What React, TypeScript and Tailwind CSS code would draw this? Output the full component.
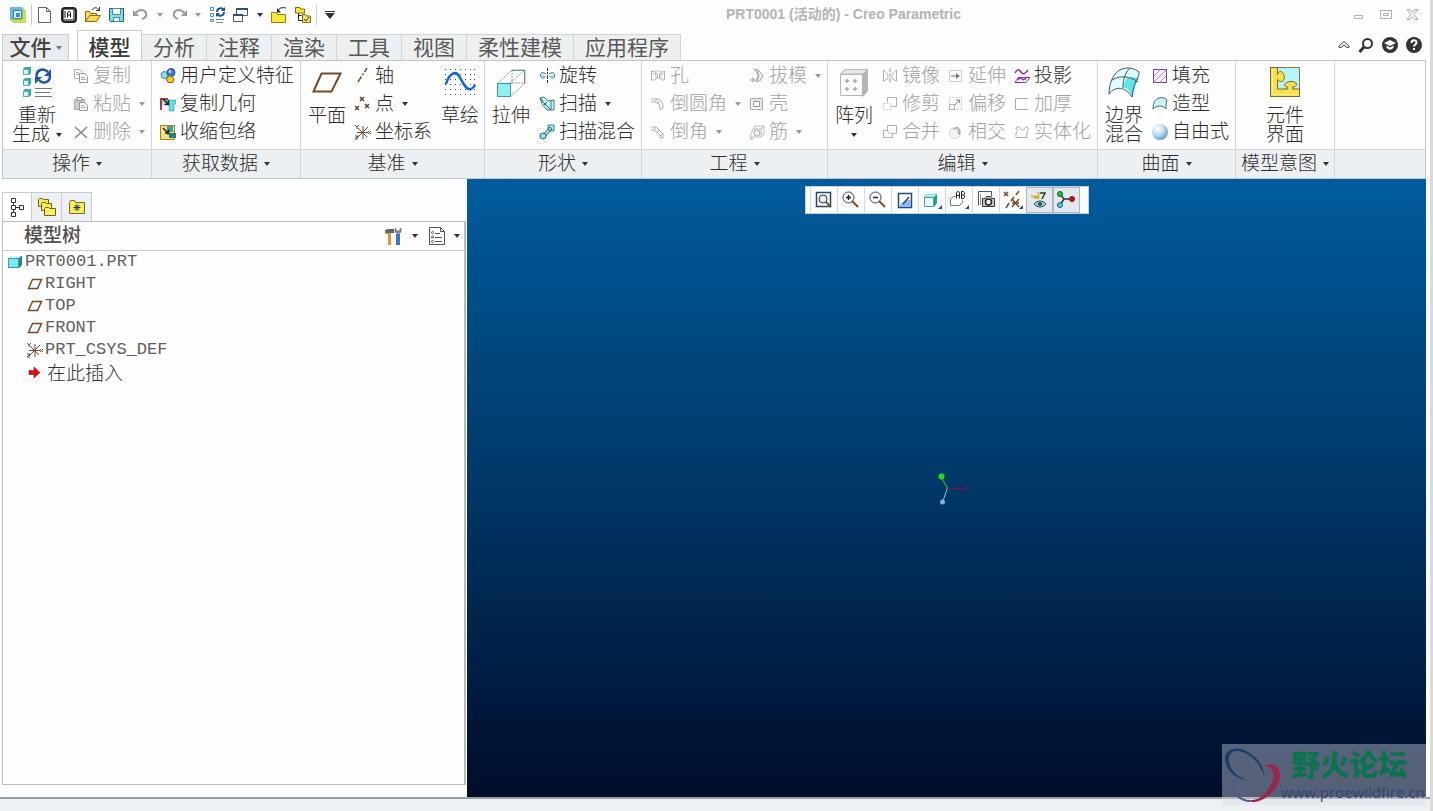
import React from "react";

type IconProps = { children: React.ReactNode; w?: number; h?: number };

function Svg({ children, w = 16, h = 16 }: IconProps) {
  return (
    <svg width={w} height={h} viewBox={`0 0 ${w} ${h}`} fill="none" stroke="none" aria-hidden="true" className="shrink-0">
      {children}
    </svg>
  );
}

function Caret({ color = "#333" }: { color?: string }) {
  return (
    <Svg w={6} h={4}>
      <path d="M0 0h6L3 4z" fill={color} />
    </Svg>
  );
}

const G = "#b0b0b0";

/* ---------- Quick access icons ---------- */
const AppIcon = () => (
  <Svg w={18} h={18}>
    <path d="M1 1h12l4 4v12H5l-4-3z" fill="#9fcf6a" />
    <path d="M1 1h12v12H1z" fill="#6db6e6" />
    <path d="M5 5h12v12H5z" fill="#c6dc5e" />
    <path d="M4.500 4.500h8v8h-8z" fill="#d6f0fb" stroke="#2a7fb8" />
    <path d="M7 7h4v4H7z" fill="#3b8fd0" />
    <path d="M13 6v7H6" stroke="#5c9c35" />
  </Svg>
);
const NewIcon = () => (
  <Svg w={18} h={18}>
    <path d="M2.500 1.500h8l4 4v11h-12z" fill="#fff" stroke="#666" />
    <path d="M10.500 1.500v4h4" stroke="#666" />
  </Svg>
);
const ModelBadgeIcon = () => (
  <Svg w={18} h={18}>
    <rect x="2" y="2" width="14" height="14" rx="3" fill="#777" stroke="#222" strokeWidth="2" />
    <rect x="4" y="4" width="9" height="9" fill="#fff" />
    <path d="M5 5v7M7.500 11.500V7l1-1.500h1l1 1.500v4.500M7.500 9h3" stroke="#111" />
  </Svg>
);
const OpenIcon = () => (
  <Svg w={18} h={18}>
    <path d="M1.500 15.500v-10h4l1 2h6v2" fill="#fbe26a" stroke="#8a6a10" />
    <path d="M1.500 15.500l4-6h11l-4 6z" fill="#ffd84a" stroke="#8a6a10" />
    <path d="M8 4c2-3 5-3 7 0M15.500 1v3.500H12" stroke="#333" />
  </Svg>
);
const SaveIcon = () => (
  <Svg w={18} h={18}>
    <path d="M1.500 2.500h14v13h-13l-1-1z" fill="#7fdcea" stroke="#2a5a78" />
    <path d="M4.500 2.500h8v6h-8z" fill="#fff" stroke="#4a8aa0" />
    <path d="M5.500 11.500h6v4h-6z" fill="#e8f8fb" stroke="#4a8aa0" />
  </Svg>
);
const UndoIcon = () => (
  <Svg w={18} h={18}>
    <path d="M3 8c3-5 9-5 11-1 1 3-1 5-4 6" stroke="#9a9a9a" strokeWidth="2" />
    <path d="M1 4v6h6z" fill="#9a9a9a" />
  </Svg>
);
const RedoIcon = () => (
  <Svg w={18} h={18}>
    <path d="M15 8C12 3 6 3 4 7c-1 3 1 5 4 6" stroke="#9a9a9a" strokeWidth="2" />
    <path d="M17 4v6h-6z" fill="#9a9a9a" />
  </Svg>
);
const RegenSmall = () => (
  <Svg w={18} h={18}>
    <path d="M2.500 1.500h3v3h-3zM2.500 7.500h3v3h-3zM2.500 13.500h3v2h-3z" fill="#d9fbf6" stroke="#4a9a94" />
    <path d="M9 6c0-4 5-5 7-2M16 6c0 4-5 5-7 2" stroke="#1c4fa0" strokeWidth="2" />
    <path d="M17 1v4h-4zM8 11V7h4z" fill="#1c4fa0" />
    <path d="M8 13.500h8M8 16.500h7" stroke="#888" />
  </Svg>
);
const WindowsIcon = () => (
  <Svg w={18} h={18}>
    <path d="M4.500 2.500h11v7h-11z" fill="#fff" stroke="#555" />
    <path d="M4 3h12" stroke="#2d4f80" strokeWidth="2" />
    <path d="M1.500 8.500h9v7h-9z" fill="#fff" stroke="#555" />
    <path d="M1 9h10" stroke="#2d4f80" strokeWidth="2" />
  </Svg>
);
const CloseFolderIcon = () => (
  <Svg w={18} h={18}>
    <path d="M1.500 6.500h5l1 2h8v8h-14z" fill="#f8e838" stroke="#9a8410" />
    <path d="M8 5c1-3 4-4 8-3" stroke="#222" />
    <path d="M7 2v4.500h4z" fill="#222" />
  </Svg>
);
const TreeFolderIcon = () => (
  <Svg w={18} h={18}>
    <path d="M1.500 1.500h4l1 1.500h4v4h-9z" fill="#f8e838" stroke="#8a6a10" />
    <path d="M4.500 7v7.500H8M4.500 9.500h3" stroke="#222" />
    <path d="M8.500 8.500h3l1 1.500h4v6.500h-8z" fill="#f8e060" stroke="#8a6a10" />
    <path d="M10 13l2 2 3-4" stroke="#333" />
  </Svg>
);

/* ---------- Large ribbon icons ---------- */
const RegenBig = () => (
  <Svg w={32} h={32}>
    {[1, 12, 23].map((y) => (
      <g key={y}>
        <path d={`M2 ${y + 2}l2-2h6v6l-2 2H2z`} fill="#3aa99b" />
        <path d={`M2.500 ${y + 2.5}h5v5h-5z`} fill="#cffaf4" stroke="#55b5aa" />
      </g>
    ))}
    <path d="M15.500 11C15 4 22 1 27 6M29 10c0 6-7 9-11 4" stroke="#1f55a5" strokeWidth="2.500" />
    <path d="M30 3v7h-7zM14 18v-7h7z" fill="#1f55a5" />
    <path d="M14 22.500h17M14 26.500h15M14 30.500h17" stroke="#777" />
  </Svg>
);
const PlaneBig = () => (
  <Svg w={32} h={32}>
    <path d="M10.500 7.500h19l-9 18h-18z" fill="#fff" stroke="#7a4a26" strokeWidth="2" />
  </Svg>
);
const SketchBig = () => (
  <Svg w={32} h={32}>
    {[3, 8, 13, 18, 23, 28].map((y) =>
      [2, 7, 12, 17, 22, 27, 31].map((x) => <rect key={`${x}-${y}`} x={x - 1} y={y} width="1" height="1" fill="#2a4a7a" />),
    )}
    <path d="M2 18C5 8 11 4 15 10s7 15 12 13c2-1 3-2 4-4" stroke="#1466d0" strokeWidth="2.500" />
  </Svg>
);
const ExtrudeBig = () => (
  <Svg w={32} h={32}>
    <path d="M2 18L17 4h13v13L15 31" fill="#fff" stroke="#888" strokeDasharray="2 1" />
    <path d="M15 17L30 4M17 4v13l-3 3M17 17h13" stroke="#999" strokeDasharray="2 1" />
    <path d="M17 4.500h12.500v13" stroke="#4f9aa0" />
    <path d="M2.500 17.500h13v13h-13z" fill="#8ff0f2" stroke="#3a9aa0" />
  </Svg>
);
const PatternBig = () => (
  <Svg w={32} h={32}>
    <path d="M2 8l5-5h23v22l-5 6z" fill="#b4b4b4" />
    <path d="M2.500 8l5-4.500h22L25 8z" fill="#e6e6e6" stroke="#bbb" />
    <path d="M2.500 8.500h22v21h-22z" fill="#fafafa" stroke="#b5b5b5" />
    {[[9, 15], [17, 15], [9, 23], [17, 23]].map(([x, y]) => (
      <path key={`${x}${y}`} d={`M${x - 2} ${y}h4M${x} ${y - 2}v4`} stroke="#aaa" strokeWidth="1.500" />
    ))}
  </Svg>
);
const BoundaryBig = () => (
  <Svg w={34} h={32}>
    <path d="M2 28C2 18 6 6 15 3c6-2 12-1 17 3-3 6-5 11-7 25C18 20 8 20 2 28z" fill="#dffcfc" />
    <path d="M19 13c5-3 9-1 13-1-3 5-5 10-6 19-3-6-6-9-10-10z" fill="#5fe6ea" />
    <path d="M2 28C2 18 6 6 15 3c6-2 12-1 17 3 1 5-6 10-7 25C18 20 8 20 2 28z" stroke="#46565c" />
    <path d="M5 14c8-5 18-4 26 2M23 2c-5 5-7 11-7 20" stroke="#46565c" />
  </Svg>
);
const ComponentBig = () => (
  <Svg w={32} h={32}>
    <path d="M1.500 1.500h29v29h-29z" fill="#b4f4fb" stroke="#7c7a4a" />
    <path
      d="M1.500 1.500h7v7c1-3 3-4 5-2 3 3 2 9-1 9-2 0-3-1-4-2v9.500h10v-2c-2 0-3-1-3-2 0-4 11-5 12-1 0 2-2 3-4 3v2h7v7.500h-29z"
      fill="#fbe04a"
      stroke="#7a6a28"
    />
    <path d="M3.500 3v25.500H29" stroke="#fff0a0" />
  </Svg>
);

/* ---------- Small ribbon icons ---------- */
const small: Record<string, React.ReactNode> = {
  copy: (
    <>
      <path d="M1.500 1.500h5l3 3v6h-8z" fill="#fff" stroke={G} />
      <path d="M6.500 5.500h5l3 3v6h-8z" fill="#fff" stroke="#999" />
      <path d="M3 4.500h3M3 6.500h3M8 9.500h4M8 11.500h5" stroke={G} />
    </>
  ),
  paste: (
    <>
      <path d="M1.500 3.500h10v10h-10z" fill="#ccc" stroke="#aaa" />
      <path d="M4 1.500h5v3H4z" fill="#eee" stroke="#999" />
      <path d="M6.500 6.500h5l3 3v5h-8z" fill="#fff" stroke="#999" />
      <path d="M8 9.500h3M8 11.500h5" stroke={G} />
    </>
  ),
  del: <path d="M2 3l12 11M14 3L2 14" stroke="#888" strokeWidth="1.500" />,
  udf: (
    <>
      <circle cx="4.500" cy="7" r="3.500" fill="#7fe0e8" stroke="#3a8fa0" />
      <circle cx="11" cy="4.500" r="4" fill="#3f74d8" stroke="#28509a" />
      <circle cx="10" cy="3.500" r="1.500" fill="#b8d0ff" />
      <path d="M10 7.500l4 3-1 4H8l-2-3.500z" fill="#f3c62a" stroke="#8a6a10" />
    </>
  ),
  copyGeom: (
    <>
      <path d="M0 2h8v2H2v10H0z" fill="#a33d48" />
      <path d="M2 4h6v5H2z" fill="#cfd6d8" />
      <path d="M7 4h9v4h-2v7H9V8H7z" fill="#5fe0e0" stroke="#2a8f94" strokeWidth="0.500" />
      <path d="M3 3l5 5M8.500 4v4.500H4.500" stroke="#222" strokeWidth="1.500" />
    </>
  ),
  shrink: (
    <>
      <path d="M0.500 1.500h14v14H.500z" fill="#ffe36a" stroke="#a08020" />
      <path d="M7 2h6v6h-3v3H7z" fill="#3aa0a4" />
      <path d="M9 9h7v5H9z" fill="#1e7c86" />
      <path d="M3 4l5 5M8.500 5.500V9H5" stroke="#222" strokeWidth="1.500" />
    </>
  ),
  axis: <path d="M12 0L9.500 4M8.500 5.500L7.500 7M6.500 8.500L3 14" stroke="#8a5428" strokeWidth="1.500" />,
  point: (
    <path d="M5 1l4 4M9 1L5 5M0 10l4 4M4 10l-4 4M10 8l4 4M14 8l-4 4" stroke="#6a4226" strokeWidth="1.500" />
  ),
  csys: (
    <>
      <path d="M2 14L13 3M8 2v13M2 8.500h11M3 4l9 9" stroke="#7a4a26" />
      <path d="M0 1l2 2 2-2M2 3v2M13 7l3 3M16 7l-3 3M0 12h3l-3 3h3" stroke="#555" />
    </>
  ),
  revolve: (
    <>
      <path d="M8.500 0v3M8.500 4v2M8.500 7v4M8.500 12v3" stroke="#333" />
      <path d="M7 6C3 3 0 6 2 9c1 2 4 1 4-1M10 6c4-3 7 0 5 3-1 2-4 1-4-1" stroke="#2a6a72" />
      <circle cx="4" cy="8" r="1.500" fill="#7fe6ea" />
      <circle cx="13" cy="8" r="1.500" fill="#7fe6ea" />
    </>
  ),
  sweep: (
    <>
      <path d="M1 2l4-1 4 4 6-1v10H8L3 8z" fill="#bff4f6" stroke="#3a7a80" />
      <path d="M3 5l9 9M8 6l-3 3M1 2l3 3" stroke="#3a5a60" />
      <path d="M12 5v9" stroke="#3a7a80" />
    </>
  ),
  blend: (
    <>
      <path d="M9 1h6v6H9z" fill="#a8f0f4" stroke="#2f8288" />
      <path d="M4 13l8-9" stroke="#2f8288" strokeWidth="4" />
      <path d="M4 13l8-9" stroke="#8fe8ee" strokeWidth="2" />
      <circle cx="4" cy="12" r="3" fill="#8fe8ee" stroke="#2f6268" />
      <circle cx="11" cy="5" r="1.500" fill="#d8ffff" stroke="#2f6268" />
    </>
  ),
  hole: (
    <>
      <path d="M1.500 3v9h3l3-2v-4L4.500 4zM14.500 3v9h-3l-2-2v-4l3-2z" stroke={G} />
      <path d="M5 3h6v7H6z" stroke="#c4c4c4" />
      <path d="M2 6h3M11 6h3" stroke="#ccc" />
    </>
  ),
  round: <path d="M1 3h6c4 0 6 3 6 9M1 6h4c3 0 5 2 5 8M7 3l-3 3M13 12l-3 2M10 5L7 8" stroke={G} />,
  chamfer: <path d="M1 3h5l7 7v4h-3v-3L4 6H1M6 3L4 6M13 10l-3 2M9 6L7 9" stroke={G} />,
  draft: (
    <>
      <path d="M5 1l4 1 5 5-3 6-4 1 3-6z" fill="#ececec" stroke="#aaa" />
      <path d="M9 2v6l-2 5M1 12h4M3 10l3 2-3 2" stroke="#999" />
    </>
  ),
  shell: (
    <>
      <path d="M1.500 2.500h12v11h-12z" stroke="#aaa" />
      <path d="M4.500 5.500h6v5h-6z" stroke="#999" />
      <path d="M3 4h9M12 4v8" stroke="#ccc" />
    </>
  ),
  rib: (
    <>
      <path d="M1 13l3-8h8v8zM12 5l3-3v8l-3 3M4 5l2-3h9" stroke="#bbb" />
      <circle cx="8" cy="9" r="3" stroke="#aaa" />
      <path d="M1 15h3" stroke="#999" />
    </>
  ),
  mirror: (
    <>
      <path d="M8 0v15" stroke="#999" strokeDasharray="4 1" />
      <path d="M1.500 2v11l4-2c1-3 0-6-4-9zM14.500 2v11l-4-2c-1-3 0-6 4-9z" stroke={G} />
    </>
  ),
  trim: (
    <>
      <path d="M5.500 1.500h9v9h-5M5.500 1.500v5" stroke={G} />
      <path d="M1.500 7.500h7v6h-7z" stroke="#ccc" strokeDasharray="2 1" />
    </>
  ),
  merge: <path d="M5.500 1.500h9v8h-4v4h-9v-7h4zM5.500 6.500c0 2 2 3 5 3" stroke={G} />,
  extend: (
    <>
      <path d="M1.500 2.500h12v11h-12z" stroke="#ccc" />
      <path d="M3 8h6" stroke="#777" />
      <path d="M8 5l4 3-4 3z" fill="#777" />
    </>
  ),
  offset: (
    <>
      <path d="M1.500 1.500h12v12h-12z" stroke="#ccc" strokeDasharray="2 1" />
      <path d="M1.500 8.500h5v5h-5z" stroke={G} />
      <path d="M7 9l4-5M8 4h3.500v3" stroke="#888" />
    </>
  ),
  intersect: (
    <>
      <circle cx="7" cy="9" r="5.500" fill="#f4f4f4" stroke="#d4d4d4" />
      <path d="M5 5c4-2 6 1 5 5M8 3c3 0 5 3 3 8" stroke="#999" />
    </>
  ),
  project: (
    <>
      <path d="M1 5c2-4 4-4 6-1s4 2 7-2" stroke="#8a2fb0" strokeWidth="1.500" />
      <path d="M4 9.500h12l-4 5H1z" stroke="#8a2fb0" />
      <path d="M4 12c2-3 3-2 4-1s3 1 4-1" stroke="#8a2fb0" strokeWidth="1.500" />
    </>
  ),
  thicken: <path d="M14 2.500H1.500v11H14" stroke="#aaa" />,
  solidify: <path d="M2 13.500h11V7c2-1 2-4-1-4-1 3-4 4-6 1-2-2-5-1-4 1 2 0 2 2 0 4z" stroke="#aaa" />,
  fill: (
    <>
      <path d="M1.500 1.500h13v13h-13z" fill="#faf0ff" stroke="#7a45a8" />
      <path d="M2 8l6-6M2 14L14 2M8 14l6-6" stroke="#b08cd0" />
    </>
  ),
  style: (
    <>
      <path d="M1 13C1 7 3 3 7 2s6 0 8 2c-1 3-1 5-1 9-3-4-9-4-13 0z" fill="#c9f7f3" stroke="#46666a" />
    </>
  ),
};

function Sphere() {
  return (
    <Svg>
      <defs>
        <radialGradient id="ball" cx="0.35" cy="0.3" r="0.75">
          <stop offset="0" stopColor="#fff" />
          <stop offset="0.5" stopColor="#c0def5" />
          <stop offset="1" stopColor="#5c98cc" />
        </radialGradient>
      </defs>
      <circle cx="8" cy="8" r="8" fill="url(#ball)" />
    </Svg>
  );
}

/* ---------- Ribbon ---------- */
type Item = { label: string; icon: string; disabled?: boolean; menu?: boolean };

function SmallButton({ label, icon, disabled, menu }: Item) {
  return (
    <button
      type="button"
      disabled={disabled}
      className="flex h-7 items-center gap-1 whitespace-nowrap text-[19px] font-light leading-7 text-[#2c2c2c] disabled:text-[#a2a2a2]"
    >
      {icon === "sphere" ? <Sphere /> : <Svg>{small[icon]}</Svg>}
      <span>{label}</span>
      {menu && (
        <span className="ml-1">
          <Caret color={disabled ? "#999" : "#333"} />
        </span>
      )}
    </button>
  );
}

function Column({ items }: { items: Item[] }) {
  return (
    <div className="flex flex-col items-start">
      {items.map((i) => (
        <SmallButton key={i.label} {...i} />
      ))}
    </div>
  );
}

function BigButton({ icon, lines, wide, menu }: { icon: React.ReactNode; lines: string[]; wide?: boolean; menu?: "inline" | "below" }) {
  return (
    <button
      type="button"
      className={`flex shrink-0 flex-col items-center pt-1 text-[19px] font-light leading-[19px] text-[#2c2c2c] ${wide ? "w-14" : "w-10"}`}
    >
      {icon}
      <span className="mt-2 flex flex-col items-center whitespace-nowrap">
        {lines.map((l, n) => (
          <span key={l} className="flex items-center gap-1.5">
            {l}
            {menu === "inline" && n === lines.length - 1 && <Caret />}
          </span>
        ))}
      </span>
      {menu === "below" && (
        <span className="mt-2">
          <Caret />
        </span>
      )}
    </button>
  );
}

function Group({ title, width, pad = "px-1.5", children }: { title: string; width: string; pad?: string; children: React.ReactNode }) {
  return (
    <section className={`flex shrink-0 flex-col border-r border-[#d3d6d8] ${width}`}>
      <div className={`flex h-[88px] gap-2 pt-px ${pad}`}>{children}</div>
      <button
        type="button"
        className="flex h-[29px] items-center justify-center gap-1.5 whitespace-nowrap border-t border-[#d3d6d8] bg-[#edf0f2] text-[19px] font-light text-[#2c2c2c]"
      >
        {title}
        <Caret />
      </button>
    </section>
  );
}

function Ribbon() {
  return (
    <div className="ml-0.5 flex shrink-0 overflow-hidden border border-[#c3c6c8] bg-[#fdfdfd]">
      <Group title="操作" width="w-[149px]">
        <BigButton icon={<RegenBig />} lines={["重新", "生成"]} wide menu="inline" />
        <Column
          items={[
            { label: "复制", icon: "copy", disabled: true },
            { label: "粘贴", icon: "paste", disabled: true, menu: true },
            { label: "删除", icon: "del", disabled: true, menu: true },
          ]}
        />
      </Group>
      <Group title="获取数据" width="w-[149px]" pad="pl-2">
        <Column
          items={[
            { label: "用户定义特征", icon: "udf" },
            { label: "复制几何", icon: "copyGeom" },
            { label: "收缩包络", icon: "shrink" },
          ]}
        />
      </Group>
      <Group title="基准" width="w-[184px]">
        <BigButton icon={<PlaneBig />} lines={["平面"]} />
        <Column
          items={[
            { label: "轴", icon: "axis" },
            { label: "点", icon: "point", menu: true },
            { label: "坐标系", icon: "csys" },
          ]}
        />
        <BigButton icon={<SketchBig />} lines={["草绘"]} />
      </Group>
      <Group title="形状" width="w-[157px]">
        <BigButton icon={<ExtrudeBig />} lines={["拉伸"]} />
        <Column
          items={[
            { label: "旋转", icon: "revolve" },
            { label: "扫描", icon: "sweep", menu: true },
            { label: "扫描混合", icon: "blend" },
          ]}
        />
      </Group>
      <Group title="工程" width="w-[186px]" pad="pl-2">
        <Column
          items={[
            { label: "孔", icon: "hole", disabled: true },
            { label: "倒圆角", icon: "round", disabled: true, menu: true },
            { label: "倒角", icon: "chamfer", disabled: true, menu: true },
          ]}
        />
        <Column
          items={[
            { label: "拔模", icon: "draft", disabled: true, menu: true },
            { label: "壳", icon: "shell", disabled: true },
            { label: "筋", icon: "rib", disabled: true, menu: true },
          ]}
        />
      </Group>
      <Group title="编辑" width="w-[270px]">
        <BigButton icon={<PatternBig />} lines={["阵列"]} menu="below" />
        <Column
          items={[
            { label: "镜像", icon: "mirror", disabled: true },
            { label: "修剪", icon: "trim", disabled: true },
            { label: "合并", icon: "merge", disabled: true },
          ]}
        />
        <Column
          items={[
            { label: "延伸", icon: "extend", disabled: true },
            { label: "偏移", icon: "offset", disabled: true },
            { label: "相交", icon: "intersect", disabled: true },
          ]}
        />
        <Column
          items={[
            { label: "投影", icon: "project" },
            { label: "加厚", icon: "thicken", disabled: true },
            { label: "实体化", icon: "solidify", disabled: true },
          ]}
        />
      </Group>
      <Group title="曲面" width="w-[138px]">
        <BigButton icon={<BoundaryBig />} lines={["边界", "混合"]} />
        <Column
          items={[
            { label: "填充", icon: "fill" },
            { label: "造型", icon: "style" },
            { label: "自由式", icon: "sphere" },
          ]}
        />
      </Group>
      <Group title="模型意图" width="w-[99px]">
        <div className="flex flex-1 justify-center">
          <BigButton icon={<ComponentBig />} lines={["元件", "界面"]} />
        </div>
      </Group>
      <div className="flex flex-1 flex-col">
        <div className="h-[88px]" />
        <div className="h-[29px] border-t border-[#d3d6d8] bg-[#edf0f2]" />
      </div>
    </div>
  );
}

/* ---------- Title bar and tabs ---------- */
function QuickButton({ name, children }: { name: string; children: React.ReactNode }) {
  return (
    <button type="button" aria-label={name} className="flex h-6 w-6 items-center justify-center">
      {children}
    </button>
  );
}

function QuickMenu({ name, color }: { name: string; color?: string }) {
  return (
    <button type="button" aria-label={name} className="flex h-6 w-3.5 items-center justify-center">
      <Caret color={color} />
    </button>
  );
}

function TitleBar() {
  return (
    <header className="flex h-[30px] shrink-0 items-center pb-px pl-1.5">
      <div className="flex items-center">
        <QuickButton name="Creo"><AppIcon /></QuickButton>
        <span className="mx-px h-5 w-px bg-[#c8c8c8]" />
        <QuickButton name="新建"><NewIcon /></QuickButton>
        <QuickButton name="模型显示"><ModelBadgeIcon /></QuickButton>
        <QuickButton name="打开"><OpenIcon /></QuickButton>
        <QuickButton name="保存"><SaveIcon /></QuickButton>
        <QuickButton name="撤消"><UndoIcon /></QuickButton>
        <QuickMenu name="撤消列表" color="#999" />
        <QuickButton name="重做"><RedoIcon /></QuickButton>
        <QuickMenu name="重做列表" color="#999" />
        <QuickButton name="重新生成"><RegenSmall /></QuickButton>
        <QuickButton name="窗口"><WindowsIcon /></QuickButton>
        <QuickMenu name="窗口列表" />
        <QuickButton name="关闭"><CloseFolderIcon /></QuickButton>
        <QuickButton name="模型树"><TreeFolderIcon /></QuickButton>
        <span className="mx-px h-5 w-px bg-[#c8c8c8]" />
        <QuickButton name="自定义">
          <Svg w={10} h={8}>
            <path d="M0 .500h10" stroke="#333" />
            <path d="M0 2h10L5 8z" fill="#333" />
          </Svg>
        </QuickButton>
      </div>
      <h1 className="flex-1 text-center text-[14px] font-bold text-[#b4b4b4]">PRT0001 (活动的) - Creo Parametric</h1>
      <div className="flex items-center">
        <button type="button" aria-label="最小化" className="flex h-6 w-[27px] items-center justify-center">
          <Svg w={11} h={11}><path d="M1.500 6.500h8v3h-8z" stroke="#b0b0b0" /></Svg>
        </button>
        <button type="button" aria-label="最大化" className="flex h-6 w-[27px] items-center justify-center">
          <Svg w={12} h={10}>
            <path d="M.500.500h11v8H.500z" stroke="#b0b0b0" />
            <path d="M3.500 3.500h5v2h-5z" stroke="#b0b0b0" />
          </Svg>
        </button>
        <button type="button" aria-label="关闭窗口" className="flex h-6 w-[27px] items-center justify-center">
          <Svg w={13} h={11}>
            <path d="M1 .500h3l2.500 3 2.500-3h3l-4 5 4 5H9l-2.500-3-2.500 3H1l4-5z" stroke="#a8a8a8" />
          </Svg>
        </button>
      </div>
    </header>
  );
}

function TabBar() {
  const tabs = ["分析", "注释", "渲染", "工具", "视图", "柔性建模", "应用程序"];
  return (
    <nav className="flex h-[30px] shrink-0 items-end pl-0.5 text-[21px] leading-6 text-[#585858]">
      <button type="button" className="mr-2 flex h-[26px] w-[67px] items-center justify-center gap-1 border border-b-0 border-[#c9cccf] bg-[#e9ecee] font-medium text-[#444]">
        文件
        <Caret color="#777" />
      </button>
      <button type="button" className="h-[30px] w-[65px] border border-b-0 border-[#c9cccf] bg-[#fdfdfd] pt-1 font-medium text-[#383838]">
        模型
      </button>
      {tabs.map((t) => (
        <button key={t} type="button" className="h-[26px] whitespace-nowrap border-r border-t border-[#d3d6d8] bg-[#edf0f1] px-[11px]">
          {t}
        </button>
      ))}
      <div className="ml-auto flex h-full items-center gap-2 pb-px pr-1">
        <button type="button" aria-label="折叠功能区">
          <Svg w={12} h={16}>
            <path d="M1 9l5-4.500L11 9v1.500H9L6 8l-3 2.500H1z" stroke="#444" />
          </Svg>
        </button>
        <button type="button" aria-label="搜索">
          <Svg>
            <circle cx="9.500" cy="6.500" r="4.500" stroke="#333" strokeWidth="2" />
            <path d="M6 10l-4.500 5" stroke="#333" strokeWidth="3" />
          </Svg>
        </button>
        <button type="button" aria-label="学习">
          <Svg>
            <circle cx="8" cy="8" r="8" fill="#333" />
            <path d="M8 3l6 3-6 3-6-3z" fill="#fff" />
            <path d="M4.500 8.500L8 10.500l3.500-2v2.500L8 13l-3.500-2z" fill="#fff" />
          </Svg>
        </button>
        <button type="button" aria-label="帮助">
          <Svg>
            <circle cx="8" cy="8" r="8" fill="#333" />
            <path d="M5.500 6c0-3.500 5-3.500 5-.500 0 2-2.500 2-2.500 4" stroke="#fff" strokeWidth="2" />
            <rect x="7" y="11" width="2" height="2" fill="#fff" />
          </Svg>
        </button>
      </div>
    </nav>
  );
}

/* ---------- Navigator ---------- */
const PlaneSmall = () => (
  <Svg>
    <path d="M5.500 3.500h9l-4 9h-9z" fill="#fff" stroke="#7a4a26" strokeWidth="1.500" />
  </Svg>
);

function Navigator() {
  const rows = [
    { label: "RIGHT", icon: <PlaneSmall /> },
    { label: "TOP", icon: <PlaneSmall /> },
    { label: "FRONT", icon: <PlaneSmall /> },
    { label: "PRT_CSYS_DEF", icon: <Svg>{small.csys}</Svg> },
  ];
  return (
    <aside className="flex w-[467px] shrink-0 flex-col bg-[#fdfdfd] pb-3 pl-0.5 pr-px pt-[13px]">
      <div className="flex h-[29px] shrink-0">
        <button type="button" aria-label="模型树" className="flex w-[30px] items-center justify-center border border-b-0 border-[#c9cccf]">
          <Svg w={16} h={20}>
            <path d="M2.500 1.500h4v4h-4zM2.500 8.500h4v4h-4zM2.500 15.500h4v4h-4zM10.500 8.500h4v4h-4zM4.500 5.500v3M6.500 10.500h4M4.500 12.500v3" stroke="#333" />
          </Svg>
        </button>
        <button type="button" aria-label="文件夹浏览器" className="flex w-[30px] items-center justify-center border-r border-t border-[#c9cccf] bg-[#ecf0f5]">
          <Svg w={20} h={20}>
            <path d="M1.500 2.500l1-1h3l1 1h5v7h-10z" fill="#f6ea50" stroke="#6a6020" />
            <path d="M4.500 6.500l1-1h3l1 1h5v7h-10z" fill="#f6ea50" stroke="#6a6020" />
            <path d="M7.500 11.500l1-1h3l1 1h6v7h-11z" fill="#f9f060" stroke="#6a6020" />
          </Svg>
        </button>
        <button type="button" aria-label="收藏夹" className="flex w-[30px] items-center justify-center border-r border-t border-[#c9cccf] bg-[#ecf0f5]">
          <Svg w={18} h={18}>
            <path d="M1.500 4.500l1-2h4l1 2h9v11h-15z" fill="#f8ee55" stroke="#7a6a20" />
            <path d="M9 6v7M5.500 9.500h7M6.500 7l5 5M11.500 7l-5 5" stroke="#1a2f80" />
          </Svg>
        </button>
      </div>
      <div className="flex flex-1 flex-col border border-r-2 border-[#b9bcbe]">
        <div className="flex h-[29px] shrink-0 items-center border-b border-[#c9cccf] pl-[21px] pr-1">
          <h2 className="flex-1 text-[19px] font-medium leading-6 text-[#505050]">模型树</h2>
          <button type="button" aria-label="设置" className="flex items-center gap-2">
            <Svg w={20} h={20}>
              <path d="M1 4h9v3H7v12H4V8H1z" fill="#e8963c" />
              <path d="M1 4l3-1h6v4H2z" fill="#5a6670" />
              <path d="M12 8h4v11h-4z" fill="#3f74c8" />
              <path d="M11 2v4l3 2 3-2V2l-2 3h-2z" fill="#8a9298" stroke="#444" strokeWidth="0.500" />
            </Svg>
            <Caret />
          </button>
          <button type="button" aria-label="显示" className="ml-2.5 flex items-center gap-2">
            <Svg w={18} h={20}>
              <path d="M1.500 1.500h11l4 4v13h-15z" fill="#fff" stroke="#555" />
              <path d="M12.500 1.500v4h4M7 7.500h5M7 11.500h7M7 15.500h7" stroke="#555" />
              <circle cx="4.500" cy="6.500" r="1" stroke="#555" />
              <circle cx="4.500" cy="11" r="1" stroke="#555" />
              <circle cx="4.500" cy="15.500" r="1" stroke="#555" />
            </Svg>
            <Caret />
          </button>
        </div>
        <ul className="font-['Liberation_Mono','Noto_Sans_CJK_SC',monospace] text-[17px] leading-[22px] text-[#606060]">
          <li className="flex h-[22px] items-center gap-0.5 pl-1">
            <Svg>
              <path d="M1 5l3-3h11v9l-3 3H1z" fill="#2f7f86" />
              <path d="M1.500 4.500h10v9h-10z" fill="#7fe8f2" stroke="#3a9aa4" />
              <path d="M2 4l2-2h10l-2 2z" fill="#c9f8fb" />
            </Svg>
            PRT0001.PRT
          </li>
          {rows.map((r) => (
            <li key={r.label} className="flex h-[22px] items-center gap-0.5 pl-6">
              {r.icon}
              {r.label}
            </li>
          ))}
          <li className="flex h-[22px] items-center gap-1 pl-6 font-['Noto_Sans_CJK_SC',sans-serif] text-[19px] font-light text-[#333]">
            <Svg>
              <path d="M2 6.500h5V3l6 5.500L7 14v-3.500H2z" fill="#d81010" stroke="#800" strokeWidth="0.500" />
            </Svg>
            在此插入
          </li>
        </ul>
      </div>
    </aside>
  );
}

/* ---------- Graphics area ---------- */
const viewTools: { name: string; active?: boolean; icon: React.ReactNode }[] = [
  {
    name: "重新调整",
    icon: (
      <>
        <path d="M2.500 2.500h14v14h-14z" fill="#fff" stroke="#234a6e" strokeWidth="1.500" />
        <circle cx="9" cy="9" r="4" fill="#e6f4ff" stroke="#333" />
        <path d="M12 12l5 5" stroke="#7a5030" strokeWidth="2" />
      </>
    ),
  },
  {
    name: "放大",
    icon: (
      <>
        <circle cx="7.500" cy="7.500" r="5.500" fill="#f4faff" stroke="#444" />
        <path d="M5 7.500h5M7.500 5v5" stroke="#222" strokeWidth="1.500" />
        <path d="M11 11l6 6" stroke="#7a5030" strokeWidth="2" />
      </>
    ),
  },
  {
    name: "缩小",
    icon: (
      <>
        <circle cx="7.500" cy="7.500" r="5.500" fill="#f4faff" stroke="#444" />
        <path d="M5 7.500h5" stroke="#222" strokeWidth="1.500" />
        <path d="M11 11l6 6" stroke="#7a5030" strokeWidth="2" />
      </>
    ),
  },
  {
    name: "重画",
    icon: (
      <>
        <path d="M3.500 3.500h13v14h-13z" fill="#fff" stroke="#234a7a" strokeWidth="1.500" />
        <path d="M4 17c2-5 6-7 12-7v7z" fill="#8ab8ec" />
        <path d="M8 14l6-7" stroke="#234a7a" strokeWidth="1.500" />
      </>
    ),
  },
  {
    name: "显示样式",
    icon: (
      <>
        <path d="M12 7l3-3v9l-3 4z" fill="#1f9a98" />
        <path d="M2 7l3-3h10l-3 3z" fill="#b8f4f0" stroke="#4aa8a4" strokeWidth="0.500" />
        <path d="M2.500 7.500h9v9h-9z" fill="#eefefe" stroke="#4aa8a4" />
        <path d="M20 15v4h-4z" fill="#444" />
      </>
    ),
  },
  {
    name: "已命名视图",
    icon: (
      <>
        <path d="M1.500 15.500v-6l3-3h2M1.500 15.500h9l3-3v-2" stroke="#4a8a88" />
        <path d="M7.500 8.500V3l1-1.500h1l1 1.500v5.500M7.500 5.500h3M12.500 1.500v7h2l1-1V6l-1-1 1-1V2.500l-1-1zM12.500 5h2" stroke="#222" />
        <path d="M20 15v4h-4z" fill="#444" />
      </>
    ),
  },
  {
    name: "视图管理器",
    icon: (
      <>
        <path d="M2.500 15.500v-14h13v5" stroke="#555" />
        <path d="M4.500 4v11" stroke="#999" />
        <path d="M6.500 8.500h3l1-2h4l1 2h3v8h-12z" fill="#c8ccd0" stroke="#333" />
        <circle cx="12.500" cy="12" r="3" fill="#fff" stroke="#222" strokeWidth="1.500" />
      </>
    ),
  },
  {
    name: "基准显示",
    icon: (
      <>
        <path d="M1 2l4 4M5 2L1 6M16 1l-3 4M11 7L8 11M6 13l-3 5" stroke="#7a4a26" strokeWidth="1.500" />
        <path d="M9 9l7 8M16 9l-7 8M9 13h7" stroke="#7a4a26" strokeWidth="1.500" />
        <path d="M20 15v4h-4z" fill="#444" />
      </>
    ),
  },
  {
    name: "注释显示",
    active: true,
    icon: (
      <>
        <path d="M2 6.500h7M9.500 2v6H5" stroke="#c8b020" strokeWidth="1.500" />
        <path d="M11 3h5l-3 6" stroke="#333" strokeWidth="1.500" />
        <path d="M5 14c3-4 9-4 12 0-3 4-9 4-12 0z" fill="#9accc8" stroke="#2a5a60" />
        <circle cx="11" cy="14" r="2" fill="#1f5a60" />
      </>
    ),
  },
  {
    name: "旋转中心",
    active: true,
    icon: (
      <>
        <path d="M4 4l4 5-4 6M8 9h8" stroke="#333" strokeWidth="1.500" />
        <circle cx="4" cy="4" r="2.500" fill="#28c828" stroke="#146014" />
        <circle cx="4" cy="15" r="2.500" fill="#50d0e0" stroke="#146070" />
        <circle cx="16" cy="9" r="2.500" fill="#d01818" stroke="#701010" />
      </>
    ),
  },
];

function Viewport() {
  return (
    <main className="relative flex min-w-0 flex-1 items-start justify-center bg-linear-to-b from-[#005c9e] via-[#003767] to-[#000d2b] pt-[7px]">
      <div role="toolbar" className="flex h-7 border border-[#c8d4e0] bg-[#fdfdfd] pl-1 pr-2">
        {viewTools.map((t) => (
          <button
            key={t.name}
            type="button"
            aria-label={t.name}
            className={`flex w-[27px] items-center justify-center ${t.active ? "border border-[#a8b8c8] bg-[#e2e8ee]" : "border-l border-[#d8dadc]"}`}
          >
            <Svg w={20} h={20}>{t.icon}</Svg>
          </button>
        ))}
      </div>
      <div className="absolute left-1/2 top-1/2 -ml-3 -mt-4">
        <Svg w={36} h={34}>
          <path d="M12.500 16L6 5" stroke="#1f9a2c" strokeWidth="1.500" />
          <path d="M12.500 16L8 29" stroke="#8fc4f0" />
          <path d="M12.500 16.500H29M28 14l4 2.500-4 2.500" stroke="#8a1038" />
          <circle cx="6.500" cy="4.500" r="3" fill="#16e816" />
          <circle cx="7.500" cy="30" r="2.500" fill="#6cb4f4" />
        </Svg>
      </div>
    </main>
  );
}

function Watermark() {
  return (
    <div className="absolute bottom-1.5 right-1 flex h-[61px] w-[204px] bg-[#d8dce8]/40">
      <div className="w-[59px] shrink-0">
        <Svg w={60} h={61}>
          <path fillRule="evenodd" d="M3 16C2 6 12 2 22 6c12 5 20 16 20 26-4-12-12-21-22-24C11 5 6 10 7 17c1 9 8 16 18 19C13 35 4 26 3 16z" fill="#1c3c6c" />
          <path d="M41 33c1 8-3 12-10 12s-12-5-4-10" stroke="#4a6484" strokeWidth="1.500" />
          <path d="M16 35c-8 2-8 12-1 17 4 3 8 5 13 5" stroke="#4d5d92" strokeWidth="2" />
          <path d="M42 22c9-4 16 1 16 9 0 11-10 22-21 26-5 2-9 1-11-1 7 1 14-2 19-9 5-6 8-14 6-19-2-4-5-6-9-6z" fill="#9a2650" />
        </Svg>
      </div>
      <div className="flex flex-col whitespace-nowrap">
        <span className="pl-2.5 pt-1 text-[29px] font-black leading-9 text-[#0b7350]">野火论坛</span>
        <span className="font-['Open_Sans',sans-serif] text-[15px] leading-4 text-[#34466a]">www.proewildfire.cn</span>
      </div>
    </div>
  );
}

export default function App() {
  return (
    <div className="relative flex h-screen flex-col overflow-hidden border-r-[3px] border-[#d9dadb] bg-[#fdfdfd] font-['Liberation_Sans','Noto_Sans_CJK_SC',sans-serif]">
      <div className="flex min-h-0 flex-1 flex-col pr-1">
        <TitleBar />
        <TabBar />
        <Ribbon />
        <div className="flex min-h-0 flex-1">
          <Navigator />
          <Viewport />
        </div>
      </div>
      <footer className="h-3.5 shrink-0 border-t-2 border-[#9c9fa2] bg-[#eef1f4]" />
      <Watermark />
    </div>
  );
}
